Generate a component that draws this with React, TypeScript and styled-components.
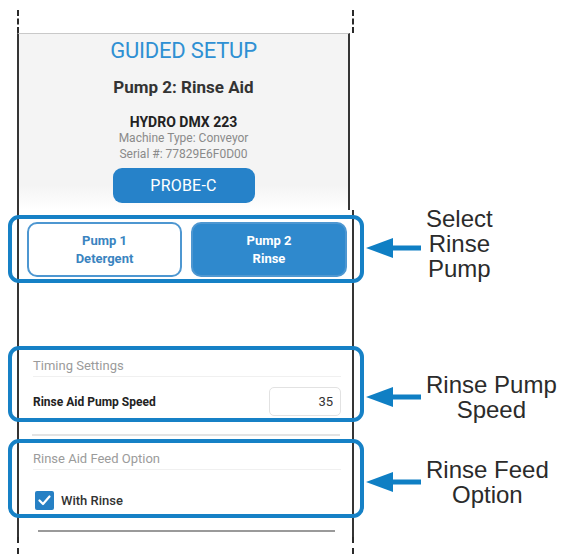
import React from 'react';
import styled, { createGlobalStyle } from 'styled-components';

const GlobalStyle = createGlobalStyle`
  html, body {
    margin: 0;
    padding: 0;
    background: #ffffff;
  }
  body {
    width: 572px;
    height: 554px;
    overflow: hidden;
    font-family: Roboto, 'Liberation Sans', sans-serif;
  }
`;

const Page = styled.div`
  width: 572px;
  height: 554px;
  display: flex;
  flex-direction: column;
`;

const Row = styled.div`
  display: flex;
  align-items: flex-start;
`;

/* one slice of the phone outline */
const Screen = styled.div<{ $pt?: number; $pb?: number }>`
  flex: none;
  margin-left: 17px;
  width: 333px;
  border-left: 2px solid #353535;
  border-right: 2px solid #353535;
  padding-top: ${(p) => p.$pt ?? 0}px;
  padding-bottom: ${(p) => p.$pb ?? 0}px;
`;

const Cap = styled.div<{ $h: number; $mt?: number }>`
  margin-left: 17px;
  margin-top: ${(p) => p.$mt ?? 0}px;
  width: 333px;
  height: ${(p) => p.$h}px;
  border-left: 2px dashed #2a2a2a;
  border-right: 2px dashed #2a2a2a;
`;

const Header = styled(Screen)`
  height: 177px;
  box-sizing: border-box;
  border-top: 1px solid #c9c9c9;
  background: linear-gradient(#f4f4f4 86%, #ffffff);
  display: flex;
  flex-direction: column;
  align-items: center;
  padding-top: 3px;
`;

const Title = styled.h1`
  margin: 0;
  font-size: 22px;
  line-height: 28px;
  font-weight: 400;
  letter-spacing: -0.2px;
  color: #2f90d3;
`;

const Subtitle = styled.h2`
  margin: 11px 0 0;
  font-size: 17px;
  line-height: 22px;
  font-weight: 700;
  color: #333333;
`;

const MachineName = styled.div`
  margin-top: 16px;
  font-size: 14px;
  line-height: 16px;
  font-weight: 700;
  color: #222222;
`;

const MachineMeta = styled.div`
  font-size: 12px;
  line-height: 16px;
  color: #8a8a8a;
`;

const ProbeButton = styled.button`
  margin-top: 6px;
  width: 142px;
  height: 35px;
  border: none;
  border-radius: 9px;
  background: #2682c9;
  color: #ffffff;
  font-family: Roboto, 'Liberation Sans', sans-serif;
  font-size: 16px;
  letter-spacing: 0.2px;
`;

/* blue callout frame drawn over the screen */
const Highlight = styled.div<{ $h: number }>`
  margin: 0 -12px 0 -11px;
  height: ${(p) => p.$h}px;
  box-sizing: border-box;
  border: 4px solid #1681c6;
  border-radius: 11px;
`;

const PumpGroup = styled(Highlight)`
  display: grid;
  grid-template-columns: 155px 156px;
  gap: 9px;
  padding: 3px 12px 2px 15px;
`;

const PumpButton = styled.button<{ $active?: boolean }>`
  height: 55px;
  border: 2px solid #4e97d1;
  border-radius: 10px;
  background: ${(p) => (p.$active ? '#2f89cd' : '#ffffff')};
  color: ${(p) => (p.$active ? '#ffffff' : '#3a84c0')};
  font-family: Roboto, 'Liberation Sans', sans-serif;
  font-size: 13px;
  font-weight: 700;
  line-height: 18px;
  padding: 0;
`;

const SettingsBox = styled(Highlight)`
  padding: 6px 19px 0 21px;
`;

const SectionTitle = styled.div`
  font-size: 13px;
  line-height: 20px;
  color: #9b9b9b;
  border-bottom: 1px solid #f0f0f0;
`;

const FieldRow = styled.div`
  margin-top: 10px;
  height: 29px;
  display: flex;
  align-items: center;
  justify-content: space-between;
`;

const FieldLabel = styled.span`
  font-size: 12px;
  font-weight: 700;
  color: #222222;
`;

const SpeedInput = styled.input`
  width: 72px;
  height: 29px;
  box-sizing: border-box;
  border: 1px solid #e2e2e2;
  border-radius: 5px;
  text-align: right;
  padding: 0 7px 0 0;
  font-family: Roboto, 'Liberation Sans', sans-serif;
  font-size: 13px;
  color: #333333;
  outline: none;
`;

const Divider = styled.div<{ $color: string; $ml: number; $w: number; $mt: number }>`
  margin-top: ${(p) => p.$mt}px;
  margin-left: ${(p) => p.$ml}px;
  width: ${(p) => p.$w}px;
  height: 2px;
  background: ${(p) => p.$color};
`;

const CheckRow = styled.label`
  margin-top: 21px;
  height: 19px;
  display: flex;
  align-items: center;
  gap: 7px;
  font-size: 13px;
  font-weight: 500;
  color: #333333;
`;

const CheckBox = styled.span`
  margin-left: 2px;
  width: 19px;
  height: 19px;
  border-radius: 2px;
  background: #2680c4;
  display: flex;
  align-items: center;
  justify-content: center;
`;

const Note = styled.div<{ $mt: number }>`
  margin: ${(p) => p.$mt}px 0 0 12px;
  display: flex;
  align-items: center;
`;

const Arrow = styled.svg<{ $dy?: number }>`
  flex: none;
  margin-top: ${(p) => (p.$dy ?? 0) * 2}px;
`;

const NoteText = styled.div`
  margin-left: 5px;
  font-family: 'Liberation Sans', Arial, sans-serif;
  font-size: 24px;
  line-height: 25px;
  color: #2b2b2b;
  text-align: center;
`;

function Pointer({ dy }: { dy?: number }) {
  return (
    <Arrow $dy={dy} width="55" height="20" viewBox="0 0 55 20">
      <polygon points="0,10 27,0 27,20" fill="#0f7fc4" />
      <rect x="26" y="7.5" width="29" height="5" fill="#0f7fc4" />
    </Arrow>
  );
}

export default function App() {
  return (
    <Page>
      <GlobalStyle />
      <Cap $h={23} $mt={10} />
      <Header>
        <Title>GUIDED SETUP</Title>
        <Subtitle>Pump 2: Rinse Aid</Subtitle>
        <MachineName>HYDRO DMX 223</MachineName>
        <MachineMeta>Machine Type: Conveyor</MachineMeta>
        <MachineMeta>Serial #: 77829E6F0D00</MachineMeta>
        <ProbeButton>PROBE-C</ProbeButton>
      </Header>

      <Row>
        <Screen $pt={5} $pb={17}>
          <PumpGroup $h={68}>
            <PumpButton>
              Pump 1
              <br />
              Detergent
            </PumpButton>
            <PumpButton $active>
              Pump 2
              <br />
              Rinse
            </PumpButton>
          </PumpGroup>
        </Screen>
        <Note $mt={-4}>
          <Pointer dy={4} />
          <NoteText>
            Select
            <br />
            Rinse
            <br />
            Pump
          </NoteText>
        </Note>
      </Row>

      <Row>
        <Screen $pt={46}>
          <SettingsBox $h={76}>
            <SectionTitle>Timing Settings</SectionTitle>
            <FieldRow>
              <FieldLabel>Rinse Aid Pump Speed</FieldLabel>
              <SpeedInput value="35" readOnly />
            </FieldRow>
          </SettingsBox>
          <Divider $color="#e3e3e3" $ml={13} $w={308} $mt={12} />
        </Screen>
        <Note $mt={72}>
          <Pointer />
          <NoteText>
            Rinse Pump
            <br />
            Speed
          </NoteText>
        </Note>
      </Row>

      <Row>
        <Screen $pt={3} $pb={5}>
          <SettingsBox $h={79}>
            <SectionTitle>Rinse Aid Feed Option</SectionTitle>
            <CheckRow>
              <CheckBox>
                <svg width="13" height="11" viewBox="0 0 13 11">
                  <polyline
                    points="1.5,5.5 5,9 11.5,1.5"
                    fill="none"
                    stroke="#ffffff"
                    strokeWidth="2.2"
                    strokeLinecap="round"
                    strokeLinejoin="round"
                  />
                </svg>
              </CheckBox>
              With Rinse
            </CheckRow>
          </SettingsBox>
          <Divider $color="#9a9a9a" $ml={19} $w={297} $mt={12} />
        </Screen>
        <Note $mt={21}>
          <Pointer />
          <NoteText>
            Rinse Feed
            <br />
            Option
          </NoteText>
        </Note>
      </Row>

      <Cap $h={17} />
    </Page>
  );
}
